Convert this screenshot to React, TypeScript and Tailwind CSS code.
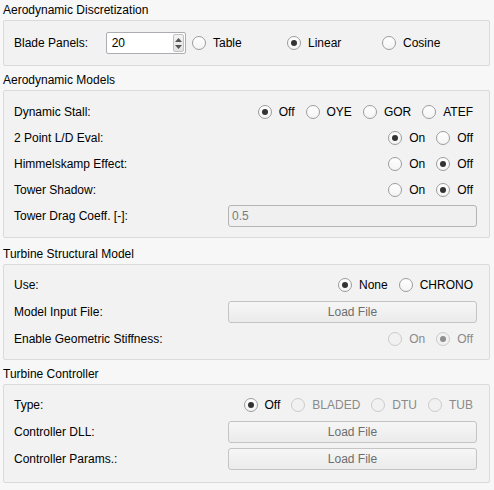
import type { ReactNode } from "react";

// Qt-like settings panel: four group boxes with labelled rows

interface RadioProps {
  label: string;
  checked?: boolean;
  disabled?: boolean;
}

function Radio({ label, checked = false, disabled = false }: RadioProps) {
  return (
    <div className="flex items-center gap-[7px] pr-[4px]">
      <span
        className={
          disabled
            ? "flex h-[14px] w-[14px] items-center justify-center rounded-full border border-[#cbcbcb] bg-[#f1f1f1]"
            : "flex h-[14px] w-[14px] items-center justify-center rounded-full border border-[#9c9c9c] bg-gradient-to-b from-white to-[#f4f4f4]"
        }
      >
        {checked && (
          <span
            className={
              disabled
                ? "h-[6px] w-[6px] rounded-full bg-[#8e8e8e]"
                : "h-[6px] w-[6px] rounded-full bg-[#333333]"
            }
          />
        )}
      </span>
      <span className={disabled ? "text-[#8a8a8a]" : "text-black"}>{label}</span>
    </div>
  );
}

function Section({
  title,
  className,
  titleClass = "h-[20px]",
  children,
}: {
  title: string;
  className: string;
  titleClass?: string;
  children: ReactNode;
}) {
  return (
    <div>
      <div className={`flex items-center ${titleClass}`}>{title}</div>
      <div className={`rounded-[2px] border border-[#dadada] bg-[#f2f2f2] pl-[10px] pr-[12px] ${className}`}>
        {children}
      </div>
    </div>
  );
}

function Row({ label, children }: { label: string; children?: ReactNode }) {
  return (
    <div className="flex h-[22px] items-center justify-between">
      <span>{label}</span>
      <div className="flex items-center gap-[7px]">{children}</div>
    </div>
  );
}

function LoadButton() {
  return (
    <div className="flex h-[22px] w-[249px] items-center justify-center rounded-[3px] border border-[#c4c4c4] bg-gradient-to-b from-[#f6f6f6] to-[#ebebeb] text-[#6e6e6e]">
      Load File
    </div>
  );
}

function SpinBox({ value }: { value: string }) {
  return (
    <div className="flex h-[22px] w-[83px] items-center justify-between rounded-[2px] border border-[#abadb3] bg-white pl-[5px] pr-[1px]">
      <span>{value}</span>
      <div className="flex h-[18px] w-[11px] flex-col items-center justify-center gap-[3px] rounded-[2px] border border-[#c2c2c2] bg-gradient-to-b from-[#f3f3f3] to-[#e3e3e3]">
        <svg width="7" height="4" viewBox="0 0 7 4">
          <path d="M0 4 L3.5 0 L7 4 Z" fill="#555" />
        </svg>
        <svg width="7" height="4" viewBox="0 0 7 4">
          <path d="M0 0 L3.5 4 L7 0 Z" fill="#555" />
        </svg>
      </div>
    </div>
  );
}

export default function App() {
  return (
    <div className="h-[490px] w-[494px] bg-[#f7f7f7] pl-[3px] pr-[4px] font-['Liberation_Sans',Arial,sans-serif] text-[12px] text-black">
      <Section title="Aerodynamic Discretization" className="py-[11px]">
        <div className="flex h-[22px] items-center">
          <span className="w-[95px]">Blade Panels:</span>
          <SpinBox value="20" />
          <div className="ml-[6px] flex">
            <div className="w-[95px]">
              <Radio label="Table" />
            </div>
            <div className="w-[95px]">
              <Radio label="Linear" checked />
            </div>
            <div className="w-[95px]">
              <Radio label="Cosine" />
            </div>
          </div>
        </div>
      </Section>

      <div className="mt-[4px]">
        <Section title="Aerodynamic Models" className="flex flex-col gap-[4px] py-[10px]">
          <Row label="Dynamic Stall:">
            <Radio label="Off" checked />
            <Radio label="OYE" />
            <Radio label="GOR" />
            <Radio label="ATEF" />
          </Row>
          <Row label="2 Point L/D Eval:">
            <Radio label="On" checked />
            <Radio label="Off" />
          </Row>
          <Row label="Himmelskamp Effect:">
            <Radio label="On" />
            <Radio label="Off" checked />
          </Row>
          <Row label="Tower Shadow:">
            <Radio label="On" />
            <Radio label="Off" checked />
          </Row>
          <Row label="Tower Drag Coeff. [-]:">
            <div className="flex h-[22px] w-[249px] items-center rounded-[3px] border border-[#b4b4b4] bg-[#f0f0f0] pl-[3px] text-[#7a7a7a]">
              0.5
            </div>
          </Row>
        </Section>
      </div>

      <div className="mt-[5px]">
        <Section
          title="Turbine Structural Model"
          titleClass="h-[21px]"
          className="flex flex-col gap-[5px] py-[9px]"
        >
          <Row label="Use:">
            <Radio label="None" checked />
            <Radio label="CHRONO" />
          </Row>
          <Row label="Model Input File:">
            <LoadButton />
          </Row>
          <Row label="Enable Geometric Stiffness:">
            <Radio label="On" disabled />
            <Radio label="Off" checked disabled />
          </Row>
        </Section>
      </div>

      <div className="mt-[4px]">
        <Section title="Turbine Controller" className="flex flex-col gap-[5px] pb-[12px] pt-[9px]">
          <Row label="Type:">
            <Radio label="Off" checked />
            <Radio label="BLADED" disabled />
            <Radio label="DTU" disabled />
            <Radio label="TUB" disabled />
          </Row>
          <Row label="Controller DLL:">
            <LoadButton />
          </Row>
          <Row label="Controller Params.:">
            <LoadButton />
          </Row>
        </Section>
      </div>
    </div>
  );
}
